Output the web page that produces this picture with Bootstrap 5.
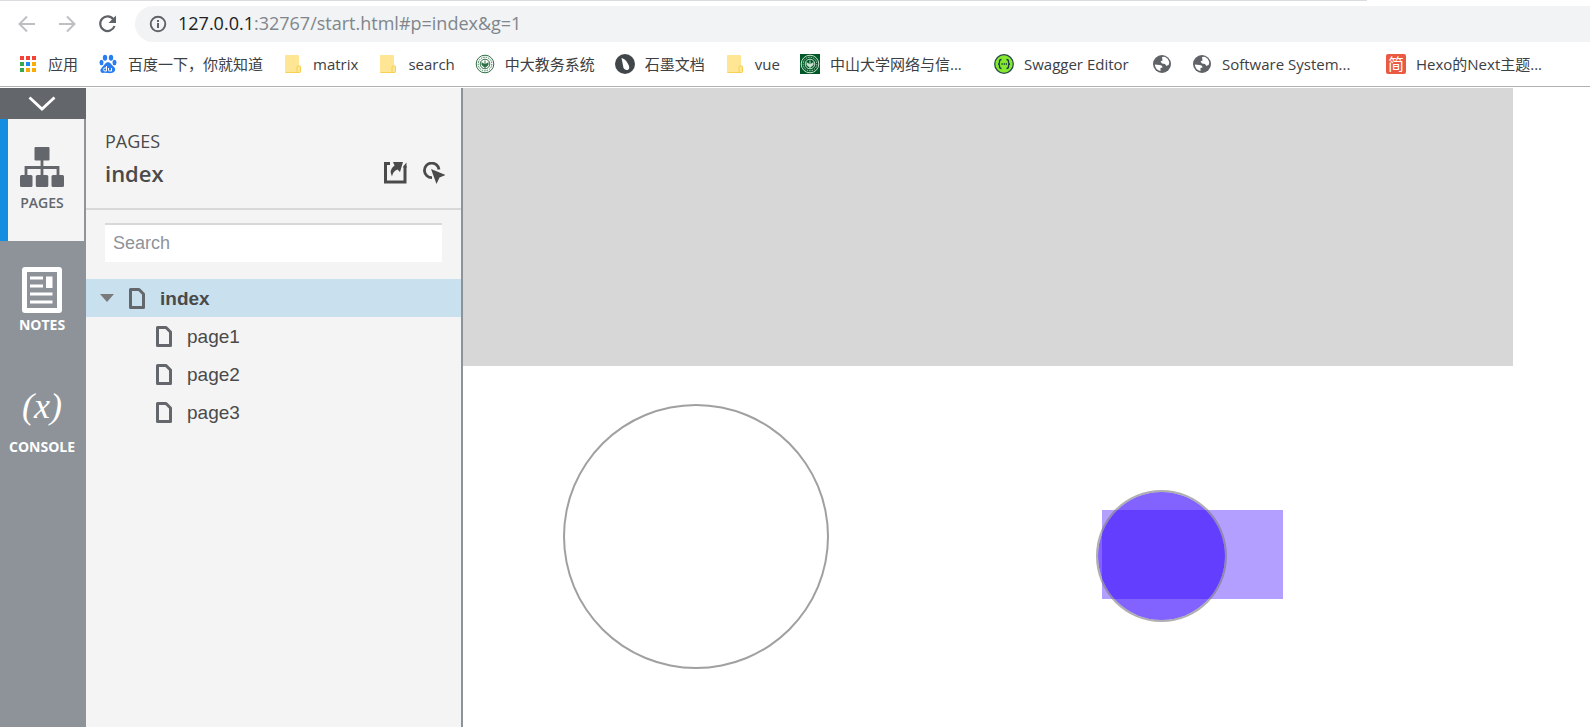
<!DOCTYPE html>
<html lang="zh-CN">
<head>
<meta charset="utf-8">
<meta name="viewport" content="width=device-width, initial-scale=1">
<title>index</title>
<link href="https://cdn.jsdelivr.net/npm/bootstrap@5.3.0/dist/css/bootstrap.min.css" rel="stylesheet">
<style>
  :root { --rail: #8e939a; --dark: #63666b; --panel: #f4f4f4; --ink: #4a4a4a; }
  body { font-family: "Liberation Sans", "Noto Sans CJK SC", sans-serif; color: var(--ink); background: #fff; }
  svg { display: block; flex: none; }
  button { border: 0; background: none; padding: 0; }

  /* browser bar */
  .browser { font-family: "Open Sans", "Noto Sans CJK SC", sans-serif; border-bottom: 1px solid #b1b1b3; height: 87px; margin-bottom: 1px; overflow: hidden; }
  .topline { height: 1px; width: 86%; background: #dadce0; }
  .tools { margin-top: 5px; gap: 20px; padding-left: 17px; }
  .omnibox { height: 36px; border-radius: 18px 0 0 18px; background: #f1f3f4; padding-left: 14px; gap: 11px; margin-left: -3px; }
  .url { font-size: 18px; line-height: 24px; color: #80868b; padding-bottom: 2px; }
  .url b { font-weight: 400; color: #202124; }
  .marks { height: 44px; gap: 20px; padding-left: 18px; font-size: 15px; line-height: 20px; }
  .marks a { color: #3c4043; text-decoration: none; gap: 10px; }
  .marks .long { width: 144px; }
  .marks .mid { width: 108px; }

  /* left rail */
  .rail { width: 86px; background: var(--rail); }
  .fold { height: 31px; padding-right: 2px; background: var(--dark); }
  .tab { height: 122px; padding-right: 2px; color: #fff; font: 700 14px/16px "Open Sans", sans-serif; }
  .tab.on { background: var(--panel); color: var(--dark); font-weight: 600; box-shadow: inset 8px 0 #138de0, inset -2px 0 var(--rail); }
  .tab .pic { height: 48px; margin-top: 24px; }
  .tab .fx { font: italic 400 36px/38px "Liberation Serif", serif; }

  /* sitemap panel */
  .panel { width: 377px; background: var(--panel); border-right: 2px solid var(--rail); }
  .head { height: 122px; padding: 38px 16px 0 19px; border-bottom: 2px solid #d8d8d8; font-family: "Open Sans", sans-serif; }
  .head h1 { font-size: 18px; line-height: 30px; margin: 0; font-weight: 400; }
  .head h2 { font-size: 22px; line-height: 34px; margin: 0; font-weight: 600; }
  .find { margin: 13px 19px 17px; height: 39px; border: 0; border-top: 2px solid #d8d8d8; border-radius: 0; padding: 0 8px; font-size: 18px; }
  .find::placeholder { color: #8e939a; opacity: 1; }
  .tree, .tree ul { list-style: none; padding: 0; margin: 0; }
  .tree a { height: 38px; color: var(--ink); text-decoration: none; font-size: 19px; line-height: 38px; gap: 15px; padding-left: 70px; }
  .tree a.top { background: #c9e0ef; font-weight: 700; padding-left: 14px; }
  .tree span { padding-top: 2px; }

  /* prototype canvas: free placement of widgets */
  .stage > div { position: absolute; }
  .banner { left: 0; top: 0; width: 1050px; height: 278px; background: #d7d7d7; }
  .ring { left: 100px; top: 316px; width: 266px; height: 265px; border: 2px solid #a0a0a0; border-radius: 50%; }
  .bar { left: 639px; top: 422px; width: 181px; height: 89px; background: rgba(51,0,255,.377); }
  .ball { left: 633px; top: 402px; width: 131px; height: 132px; background: rgba(51,0,255,.61); background-clip: padding-box; border: 2px solid rgba(121,121,121,.6); border-radius: 50%; }
</style>
</head>
<body class="d-flex flex-column min-vh-100 overflow-hidden">
<svg width="0" height="0" class="position-absolute" aria-hidden="true">
  <symbol id="folder" viewBox="0 0 20 20"><path d="M3 1h12q1 0 1 1v10h1q1 0 1 1v5q0 1-1 1H3q-1 0-1-1V2q0-1 1-1z" fill="#ffe694"/><path d="M2.500 18.500h14.500M14 18v-5q0-1 1-1h2q.5 0 .5 1v5" fill="none" stroke="#f7d154"/></symbol>
  <symbol id="globe" viewBox="0 0 20 20"><circle cx="10" cy="10" r="9" fill="#5f6368"/><path d="M2.800 10.500l4.700.5q3 0 3 2.500l-2 .5v3Q3.500 16 2.800 10.500zM10 3l3-.3q3.500 1.800 4.200 5.300l-.2 2.500-2.500 1.500-1.500-2-3-.5-1.500-2 2-1z" fill="#fff"/></symbol>
  <symbol id="seal" viewBox="0 0 20 20"><g fill="none" stroke="currentColor"><circle cx="10" cy="10" r="8.800"/><circle cx="10" cy="10" r="6.800" stroke-dasharray="1.500 1"/><circle cx="10" cy="10" r="4.800"/></g><path d="M6.500 8l3 2V6.500h1V10l3-2v3L10 14l-3.500-3z" fill="currentColor"/></symbol>
  <symbol id="page" viewBox="0 0 16 21"><path d="M1.500 1.500h8.500l4.500 4.500v13.500h-13z" fill="none" stroke="#63666b" stroke-width="3" stroke-linejoin="round"/></symbol>
</svg>

<header class="browser flex-shrink-0">
  <div class="topline"></div>
  <div class="tools d-flex align-items-center">
    <button aria-label="Back"><svg width="20" height="20" viewBox="0 0 20 20" fill="none" stroke="#bdbfc1" stroke-width="2"><path d="M18 10H3M10 2.500L2.500 10l7.500 7.500"/></svg></button>
    <button aria-label="Forward"><svg width="20" height="20" viewBox="0 0 20 20" fill="none" stroke="#bdbfc1" stroke-width="2"><path d="M2 10h15M10 2.500l7.500 7.500-7.500 7.500"/></svg></button>
    <button aria-label="Reload"><svg width="21" height="20" viewBox="0 0 21 20"><path d="M16.500 5.500A7.300 7.300 0 1 0 17.500 12" fill="none" stroke="#5f6368" stroke-width="2.200"/><path d="M19 1.500V9h-7.500z" fill="#5f6368"/></svg></button>
    <div class="omnibox d-flex align-items-center flex-grow-1">
      <svg width="18" height="18" viewBox="0 0 18 18"><circle cx="9" cy="9" r="7.300" fill="none" stroke="#5f6368" stroke-width="1.900"/><path d="M8 8h2v5H8zM8 5h2v2H8z" fill="#5f6368"/></svg>
      <a href="#p=index" class="url text-decoration-none"><b>127.0.0.1</b>:32767/start.html#p=index&amp;g=1</a>
    </div>
  </div>
  <nav class="marks d-flex align-items-center text-nowrap" aria-label="Bookmarks">
    <a href="#" class="d-flex align-items-center"><svg width="20" height="20" viewBox="0 0 20 20"><path fill="#f44336" d="M2 2h4v4H2zM8 2h4v4H8zM14 2h4v4h-4z"/><path fill="#34a853" d="M2 8h4v4H2zM2 14h4v4H2z"/><path fill="#1e88f5" d="M8 8h4v4H8z"/><path fill="#fbab05" d="M14 8h4v4h-4zM8 14h4v4H8zM14 14h4v4h-4z"/></svg>应用</a>
    <a href="#" class="d-flex align-items-center"><svg width="20" height="20" viewBox="0 0 20 20" fill="#2a7df0"><ellipse cx="7" cy="3.700" rx="2.200" ry="3"/><ellipse cx="13" cy="3.700" rx="2.200" ry="3"/><ellipse cx="3.500" cy="8.500" rx="2" ry="2.700"/><ellipse cx="16.500" cy="8.500" rx="2" ry="2.700"/><path d="M10 8q2 0 3.500 2.500l3 3q1.500 2.500-.5 4.500-1.500 1.500-6 1t-6 0q-3-2-.5-5l3-3.500Q8 8 10 8z"/><path d="M8.500 12v5H7q-1.500 0-1.500-1.500T7 14h1M10.500 14v2q0 1 1 1h2v-3" fill="none" stroke="#fff"/></svg>百度一下，你就知道</a>
    <a href="#" class="d-flex align-items-center"><svg width="20" height="20"><use href="#folder"/></svg>matrix</a>
    <a href="#" class="d-flex align-items-center"><svg width="20" height="20"><use href="#folder"/></svg>search</a>
    <a href="#" class="d-flex align-items-center"><svg width="20" height="20" color="#2f6f46"><use href="#seal"/></svg>中大教务系统</a>
    <a href="#" class="d-flex align-items-center"><svg width="20" height="20" viewBox="0 0 20 20"><circle cx="10" cy="10" r="10" fill="#41464b"/><path d="M6.500 4q4 1 6 5 3 4.500 1 6.500-3 1.500-5-1.500z" fill="#fff"/></svg>石墨文档</a>
    <a href="#" class="d-flex align-items-center"><svg width="20" height="20"><use href="#folder"/></svg>vue</a>
    <a href="#" class="d-flex align-items-center"><svg width="20" height="20" color="#c9dfcf"><rect width="20" height="20" fill="#005826"/><use href="#seal"/></svg><span class="long">中山大学网络与信...</span></a>
    <a href="#" class="d-flex align-items-center"><svg width="20" height="20" viewBox="0 0 20 20"><circle cx="10" cy="10" r="9.300" fill="#85ea2d" stroke="#2b4a4f" stroke-width="1.300"/><path d="M7.500 5.500q-2 0-2 2v1q0 1.500-1.500 1.500 1.500 0 1.500 1.500v1q0 2 2 2M12.500 5.500q2 0 2 2v1q0 1.500 1.500 1.500-1.500 0-1.500 1.500v1q0 2-2 2" fill="none" stroke="#173647" stroke-width="1.300"/><path d="M7.500 10h5.500" stroke="#173647" stroke-width="1.300" stroke-dasharray="1.300 .8"/></svg><span class="mid">Swagger Editor</span></a>
    <a href="#" class="d-flex align-items-center" aria-label="Site"><svg width="20" height="20"><use href="#globe"/></svg></a>
    <a href="#" class="d-flex align-items-center"><svg width="20" height="20"><use href="#globe"/></svg><span class="long">Software System...</span></a>
    <a href="#" class="d-flex align-items-center"><svg width="20" height="20" viewBox="0 0 20 20"><rect width="20" height="20" rx="2" fill="#ea5a43"/><text x="10" y="16" text-anchor="middle" font-size="16" fill="#fff">简</text></svg>Hexo的Next主题...</a>
  </nav>
</header>

<div class="d-flex flex-grow-1">
  <nav class="rail d-flex flex-column flex-shrink-0" aria-label="Panes">
    <button class="fold d-flex justify-content-center align-items-center" aria-label="Collapse"><svg width="28" height="16" viewBox="0 0 28 16"><path d="M1.500 1.500L14 13 26.500 1.500" fill="none" stroke="#fff" stroke-width="2.800"/></svg></button>
    <button class="tab on d-flex flex-column align-items-center">
      <span class="pic d-flex align-items-center"><svg width="44" height="40" viewBox="0 0 44 40" fill="#63666b"><rect x="14.500" width="15" height="13.500" rx="1"/><rect y="28" width="12.500" height="12" rx="1.500"/><rect x="15.800" y="28" width="12.500" height="12" rx="1.500"/><rect x="31.500" y="28" width="12.500" height="12" rx="1.500"/><path d="M22 13v16M6 29v-8.500h32V29" fill="none" stroke="#63666b" stroke-width="2.800"/></svg></span>
      <span class="mt-1">PAGES</span>
    </button>
    <button class="tab d-flex flex-column align-items-center">
      <span class="pic d-flex align-items-end"><svg width="40" height="46" viewBox="0 0 40 46"><rect width="40" height="46" rx="3" fill="#fff"/><path d="M5 5h30v36H5z" fill="#8e939a"/><path d="M8 9.500h13v3H8zM24 9.500h6.500V21H24zM8 17.500h13v3H8zM8 25.500h22.500v3H8zM8 33.500h22.500v3H8z" fill="#fff"/></svg></span>
      <span class="mt-1">NOTES</span>
    </button>
    <button class="tab d-flex flex-column align-items-center">
      <span class="pic fx">(x)</span>
      <span class="mt-1">CONSOLE</span>
    </button>
  </nav>

  <aside class="panel flex-shrink-0">
    <div class="head">
      <h1>PAGES</h1>
      <div class="d-flex align-items-center">
        <h2 class="flex-grow-1">index</h2>
        <button aria-label="Open in new window"><svg width="23" height="22" viewBox="0 0 23 22"><path d="M6 1.500H1.500v18.500h19.500V4" fill="none" stroke="#4a4a4a" stroke-width="3"/><path d="M9 0h10l-3 10-2.500-2.500Q9 9 8 14.500 4.500 8 10.500 3.500z" fill="#4a4a4a"/><path d="M19.500 4l3-3.500V6h-3z" fill="#4a4a4a"/></svg></button>
        <button class="ms-3" aria-label="Highlight interactive elements"><svg width="22" height="22" viewBox="0 0 22 22"><path d="M9 15.700A7.300 7.300 0 1 1 16 7.500" fill="none" stroke="#4a4a4a" stroke-width="2.800"/><path d="M8 7l14.500 6-6 2.500-3 6.500z" fill="#4a4a4a"/></svg></button>
      </div>
    </div>
    <div class="d-flex"><input class="find flex-grow-1" type="text" placeholder="Search" aria-label="Search"></div>
    <ul class="tree">
      <li><a href="#index" class="top d-flex align-items-center"><svg width="14" height="8" viewBox="0 0 14 8"><path d="M0 0h14L7 8z" fill="#7a7a7a"/></svg><svg width="16" height="21"><use href="#page"/></svg><span>index</span></a>
        <ul>
          <li><a href="#page1" class="d-flex align-items-center"><svg width="16" height="21"><use href="#page"/></svg><span>page1</span></a></li>
          <li><a href="#page2" class="d-flex align-items-center"><svg width="16" height="21"><use href="#page"/></svg><span>page2</span></a></li>
          <li><a href="#page3" class="d-flex align-items-center"><svg width="16" height="21"><use href="#page"/></svg><span>page3</span></a></li>
        </ul>
      </li>
    </ul>
  </aside>

  <main class="stage flex-grow-1 position-relative">
    <div class="banner"></div>
    <div class="ring"></div>
    <div class="bar"></div>
    <div class="ball"></div>
  </main>
</div>
<script src="https://cdn.jsdelivr.net/npm/bootstrap@5.3.0/dist/js/bootstrap.bundle.min.js"></script>
</body>
</html>
